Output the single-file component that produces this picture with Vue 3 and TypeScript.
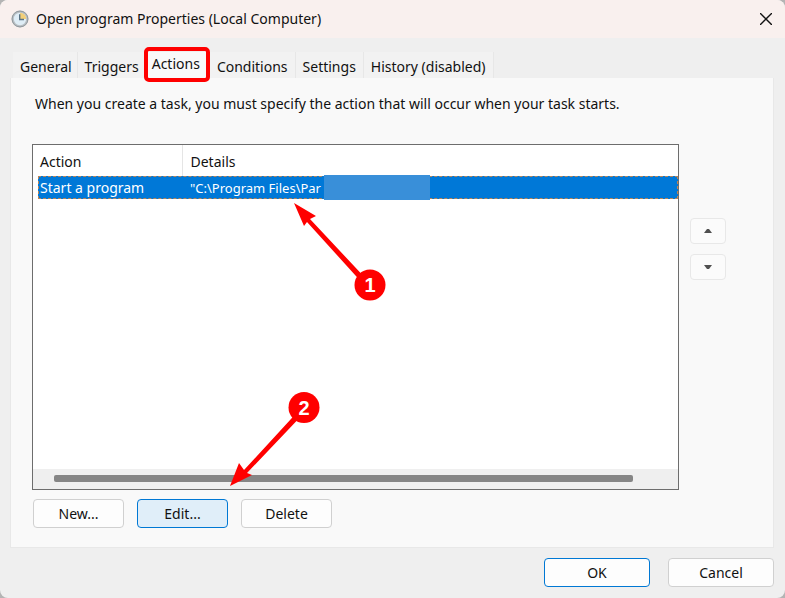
<script setup lang="ts">
import { ref } from 'vue'

const tabs: string[] = ['General', 'Triggers', 'Actions', 'Conditions', 'Settings', 'History (disabled)']
const activeTab = ref<string>('Actions')
const actions = ref([{ name: 'Start a program', details: '"C:\\Program Files\\Par' }])
</script>

<template>
  <main class="window">
    <header class="titlebar">
      <svg class="clock" viewBox="0 0 18 18" aria-hidden="true">
        <circle cx="9" cy="9" r="8.5" fill="#b9bfc3" />
        <circle cx="9" cy="9" r="7.9" fill="none" stroke="#92999e" stroke-width="1" />
        <circle cx="9" cy="9" r="6.2" fill="#dfedf6" />
        <path d="M9 9V2.8A6.2 6.2 0 0 1 15.2 9Z" fill="#f3cf78" />
        <path d="M8.7 4.2V9.5H13" fill="none" stroke="#5a7385" stroke-width="1.4" />
      </svg>
      <h1>Open program Properties (Local Computer)</h1>
      <button class="close" type="button" aria-label="Close">
        <svg viewBox="0 0 12 12" aria-hidden="true">
          <path d="M0.5 0.5L11.5 11.5M11.5 0.5L0.5 11.5" stroke="#111" stroke-width="1.4" stroke-linecap="round" />
        </svg>
      </button>
    </header>

    <div class="body">
      <nav class="tabs" role="tablist">
        <button
          v-for="tab in tabs"
          :key="tab"
          type="button"
          role="tab"
          :aria-selected="tab === activeTab"
          :class="['tab', { active: tab === activeTab }]"
          @click="activeTab = tab"
        >{{ tab }}</button>
      </nav>

      <section class="panel">
        <p class="intro">When you create a task, you must specify the action that will occur when your task starts.</p>
        <div class="content">
          <div class="list">
            <table>
              <colgroup><col class="col-action"><col></colgroup>
              <thead>
                <tr><th>Action</th><th>Details</th></tr>
              </thead>
              <tbody>
                <tr v-for="action in actions" :key="action.name">
                  <td>{{ action.name }}</td>
                  <td><div class="path">{{ action.details }}<span class="mask"></span></div></td>
                </tr>
              </tbody>
            </table>
            <div class="scrollbar"><div class="thumb"></div></div>
            <svg class="notes" viewBox="0 0 360 346" aria-hidden="true">
              <g fill="#f00">
                <path d="M262 59L284 72L278 75L337 138L333 142L275 78L272 82Z" />
                <circle cx="338" cy="141" r="15.5" />
                <path d="M198 342L207 319L212 326L270 263L274 267L215 329L220 331Z" />
                <circle cx="272" cy="263.5" r="15.5" />
              </g>
              <g class="digits">
                <text x="338" y="148">1</text>
                <text x="272" y="271">2</text>
              </g>
            </svg>
          </div>
          <div class="order">
            <button type="button" aria-label="Move up"><svg viewBox="0 0 10 6"><path d="M1 5L4 1H6L9 5Z" /></svg></button>
            <button type="button" aria-label="Move down"><svg viewBox="0 0 10 6"><path d="M1 1L4 5H6L9 1Z" /></svg></button>
          </div>
        </div>
        <div class="commands">
          <button class="btn" type="button">New...</button>
          <button class="btn hot" type="button">Edit...</button>
          <button class="btn" type="button">Delete</button>
        </div>
      </section>

      <footer class="footer">
        <button class="btn wide default" type="button">OK</button>
        <button class="btn wide" type="button">Cancel</button>
      </footer>
    </div>
  </main>
</template>

<style>
body { background: #b4b4b4; }
</style>

<style scoped>
* { box-sizing: border-box; }
.window {
  min-height: 100vh;
  display: flex;
  flex-direction: column;
  overflow: hidden;
  border-radius: 8px;
  background: #efefef;
  color: #111;
  font: 14px/20px "Noto Sans", "Open Sans", sans-serif;
}
button { font: inherit; color: inherit; padding: 0; }
.titlebar {
  height: 38px;
  display: flex;
  align-items: center;
  padding: 0 13px 0 11px;
  background: #f9f0ee;
}
.clock { width: 18px; height: 18px; margin-right: 7px; }
h1 { flex: 1; margin: 0; font-size: 14px; font-weight: 400; }
.close { display: flex; border: 0; background: none; }
.close svg { width: 12px; height: 12px; }
.body { flex: 1; display: flex; flex-direction: column; padding: 14px 11px 11px 10px; }
.tabs { display: flex; height: 26px; padding-left: 3px; }
.tab {
  padding: 4px 7px 0;
  border: 0;
  border-right: 1px solid #e7e7e7;
  background: #f2f2f2;
  line-height: 20px;
  white-space: nowrap;
}
.tab:nth-child(-n+2) { padding-right: 5px; }
.tab.active {
  position: relative;
  padding: 0 10px 2px 7px;
  border: 0;
  background: #f9f9f9;
}
.tab.active::after {
  content: "";
  position: absolute;
  inset: -5px 0 -4px -1px;
  border: 4px solid #f00;
  border-radius: 5px;
}
.panel {
  flex: 1;
  display: flex;
  flex-direction: column;
  padding: 16px 47px 19px 21px;
  background: #f9f9f9;
  border: 1px solid #e8e8e8;
  border-top: 0;
}
.intro { margin: 0 0 30px 3px; }
.content { flex: 1; display: flex; gap: 11px; }
.list {
  position: relative;
  flex: 1;
  display: flex;
  flex-direction: column;
  justify-content: space-between;
  padding-left: 5px;
  border: 1px solid #6d6d6d;
  background: #fff;
}
table { width: 100%; table-layout: fixed; border-collapse: collapse; }
.col-action { width: 144px; }
th, td { padding: 0 2px; text-align: left; font-weight: 400; white-space: nowrap; }
th { height: 31px; padding-top: 2px; }
th:first-child { border-right: 1px solid #e5e5e5; }
th + th, td + td { padding-left: 8px; }
td { height: 23px; }
tbody tr { background: #0078d7; color: #fff; outline: 1px dashed #b88458; outline-offset: -1px; }
.path { display: flex; align-items: center; gap: 3px; height: 23px; font-size: 13px; }
.mask { position: relative; z-index: 1; width: 106px; height: 25px; background: #398fd9; }
.scrollbar { margin-left: -5px; padding: 6px 45px 7px 21px; background: #efefef; }
.thumb { height: 7px; border-radius: 2px; background: #858585; }
.notes { position: absolute; top: -1px; left: -1px; width: 360px; height: 346px; }
.digits { fill: #fff; font: bold 20px "Liberation Sans", Arial, sans-serif; text-anchor: middle; }
.order { display: flex; flex-direction: column; gap: 10px; padding-top: 74px; }
.order button {
  display: flex;
  align-items: center;
  justify-content: center;
  width: 36px;
  height: 26px;
  border: 1px solid #e8e8e8;
  border-radius: 4px;
  background: #fbfbfb;
}
.order svg { width: 10px; height: 6px; fill: #505050; }
.commands { display: flex; gap: 13px; padding: 9px 0 0 1px; }
.btn {
  width: 91px;
  height: 29px;
  border: 1px solid #d0d0d0;
  border-radius: 4px;
  background: #fdfdfd;
}
.btn.hot { border-color: #0078d4; background: #e0eef9; }
.btn.default { border-color: #0078d4; }
.btn.wide { width: 106px; }
.footer { display: flex; justify-content: flex-end; gap: 18px; padding-top: 10px; }
</style>
